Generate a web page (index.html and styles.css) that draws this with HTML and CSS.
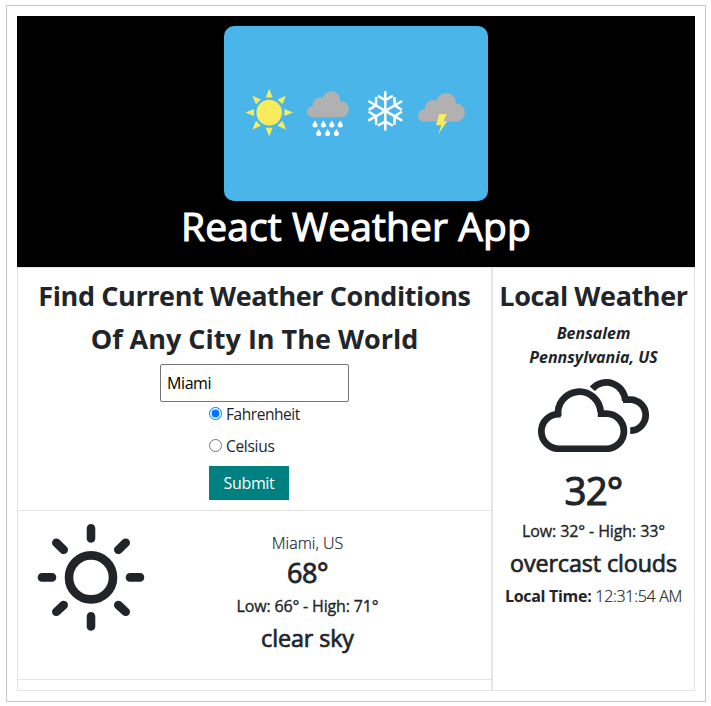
FILE: index.html
```html
<!DOCTYPE html>
<html lang="en">
<head>
<meta charset="utf-8">
<title>React Weather App</title>
<link rel="stylesheet" href="styles.css">
</head>
<body>
<div class="app">
  <header class="header">
    <svg class="banner" viewBox="0 0 264 175">
      <defs>
        <path id="ray" d="M0-23.8L3.5-15.2H-3.5Z"/>
        <path id="drop" d="M0-.3C.8 2 2.6 3.2 2.6 4.6A2.6 2.5 0 0 1-2.6 4.6C-2.6 3.2-.8 2 0-.3Z"/>
        <path id="arm" d="M0 0V-18.6M-6.6-14.4L0-10.8L6.6-14.4"/>
      </defs>
      <g fill="#f8eb5c" transform="translate(45.2 86.6)">
        <circle r="12.8"/>
        <use href="#ray"/><use href="#ray" transform="rotate(45)"/><use href="#ray" transform="rotate(90)"/><use href="#ray" transform="rotate(135)"/>
        <use href="#ray" transform="rotate(180)"/><use href="#ray" transform="rotate(225)"/><use href="#ray" transform="rotate(270)"/><use href="#ray" transform="rotate(315)"/>
      </g>
      <g fill="#b1b1b1">
        <circle cx="88.4" cy="85.7" r="5.4"/><circle cx="96.3" cy="78.9" r="7.5"/><circle cx="107.3" cy="74" r="9"/><circle cx="117" cy="83.2" r="8"/><path d="M88.4 80H117V91.2H88.4Z"/>
        <circle cx="200" cy="89.6" r="6"/><circle cx="209.3" cy="82.4" r="8.3"/><circle cx="222" cy="76.8" r="9.8"/><circle cx="231.8" cy="86.4" r="9.2"/><path d="M200 84H231.8V95.6H200Z"/>
      </g>
      <g fill="#fff">
        <use href="#drop" x="91" y="94.5"/><use href="#drop" x="99.4" y="94.5"/><use href="#drop" x="107.8" y="94.5"/><use href="#drop" x="116.3" y="94.5"/>
        <use href="#drop" x="94.7" y="103"/><use href="#drop" x="103.6" y="103"/><use href="#drop" x="112.4" y="103"/>
      </g>
      <g fill="none" stroke="#fff" stroke-width="2.5" stroke-linecap="round" transform="translate(161.3 84.8)">
        <use href="#arm"/><use href="#arm" transform="rotate(60)"/><use href="#arm" transform="rotate(120)"/><use href="#arm" transform="rotate(180)"/><use href="#arm" transform="rotate(240)"/><use href="#arm" transform="rotate(300)"/>
      </g>
      <path fill="#f8eb5c" d="M215.2 88H222.7L219.5 95.3H223.3L214.3 108L217.3 99.2H212Z"/>
    </svg>
    <h1 class="title">React Weather App</h1>
  </header>
  <main class="main">
    <div class="left">
      <section class="search">
        <h2 class="heading">Find Current Weather Conditions<br><span class="second">Of Any City In The World</span></h2>
        <input class="city" type="text" value="Miami">
        <div class="options">
          <label class="option"><input class="radio" type="radio" name="unit" checked><span class="fahr">Fahrenheit</span></label>
          <label class="option"><input class="radio" type="radio" name="unit"><span class="cels">Celsius</span></label>
          <button class="submit">Submit</button>
        </div>
      </section>
      <section class="result">
        <svg class="sun" viewBox="-54 -54.4 108 108">
          <circle r="22"/>
          <path d="M0-49V-39M0 39V49M-49 0H-39M39 0H49M-34.7-34.7L-27.3-27.6M34.7-34.7L27.3-27.6M-34.7 34.4L-27.3 27.6M34.7 34.4L27.3 27.6"/>
        </svg>
        <div class="details">
          <div class="place">Miami, US</div>
          <div class="temp">68°</div>
          <div class="range">Low: 66° - High: 71°</div>
          <div class="sky">clear sky</div>
        </div>
      </section>
    </div>
    <aside class="local">
      <h2 class="heading">Local Weather</h2>
      <div class="region">Bensalem<br>Pennsylvania, US</div>
      <svg class="clouds" viewBox="0 0 112 73">
        <path d="M22.7 35.1H20.7A17.3 17.3 0 0 0 20.7 69.8H68.3A17.3 17.3 0 0 0 68.3 34.6H59.8"/>
        <path d="M20.3 37.4A21.3 21.3 0 1 1 62.6 33"/>
        <path d="M54.3 9.8A18.9 18.9 0 0 1 87.3 22"/>
        <path d="M85 20.6H92.2A15.3 15.3 0 0 1 92.2 51.6"/>
      </svg>
      <div class="temp big">32°</div>
      <div class="range">Low: 32° - High: 33°</div>
      <div class="sky">overcast clouds</div>
      <div class="time"><b>Local Time:</b> 12:31:54 AM</div>
    </aside>
  </main>
</div>
</body>
</html>
```
FILE: styles.css
```css
* { box-sizing: border-box; }
body {
  margin: 0;
  padding: 5px 0 0 6px;
  background: #fff;
  color: #212529;
  font: 16px/24px "Open Sans", "Noto Sans", sans-serif;
  text-align: center;
  white-space: nowrap;
}
.app {
  width: 700px;
  height: 697px;
  padding: 10px;
  border: 1px solid #c8c8c8;
}
.header {
  height: 251px;
  padding-top: 10px;
  background: #000;
  color: #fff;
}
.banner {
  display: block;
  width: 264px;
  height: 175px;
  margin: 0 auto;
  border-radius: 10px;
  background: #4ab5e8;
}
.title {
  margin: 1px 0 0;
  font-size: 39px;
  font-weight: 400;
  line-height: 48px;
  letter-spacing: .1px;
  -webkit-text-stroke: 1.1px;
}
.main { display: flex; height: 424px; }
.left {
  display: flex;
  flex-direction: column;
  width: 475px;
  border: 1px solid #e4e4e4;
}
.search {
  display: flex;
  flex-direction: column;
  align-items: center;
  height: 243px;
  padding-top: 6px;
  border-bottom: 1px solid #e4e4e4;
}
.heading {
  margin: 0;
  font-size: 27px;
  font-weight: 700;
  line-height: 43px;
  letter-spacing: -.4px;
}
.second { letter-spacing: 0; }
.city {
  width: 189px;
  height: 38px;
  margin-top: 4px;
  padding: 1px 6px;
  border: 1px solid #767676;
  border-radius: 2px;
  background: #fff;
  color: #000;
  font: inherit;
  letter-spacing: -.4px;
}
.options {
  display: flex;
  flex-direction: column;
  align-items: flex-start;
  gap: 8px;
  width: 91px;
}
.option { display: flex; align-items: center; gap: 4px; height: 24px; }
.radio { width: 13px; height: 13px; margin: 0 0 1px; accent-color: #0075ff; }
.fahr, .cels { font-size: 15.5px; letter-spacing: -.45px; }
.cels { letter-spacing: -.3px; }
.submit {
  width: 80px;
  height: 34px;
  padding: 0;
  border: 0;
  background: #008080;
  color: #fff;
  font: inherit;
  letter-spacing: -.35px;
}
.result {
  display: flex;
  height: 169px;
  padding: 12px 0 0 19px;
  border-bottom: 1px solid #e4e4e4;
}
.sun {
  width: 108px;
  height: 108px;
  fill: none;
  stroke: #212529;
  stroke-width: 8.6;
  stroke-linecap: round;
}
.details { width: 325px; padding-top: 8px; }
.place { font-weight: 300; -webkit-text-stroke: .2px; }
.temp {
  font-size: 27px;
  line-height: 36px;
  letter-spacing: -.5px;
  -webkit-text-stroke: .8px;
}
.range {
  margin-top: 5px;
  line-height: 20px;
  letter-spacing: -.17px;
  -webkit-text-stroke: .35px;
}
.sky {
  margin-top: 8px;
  font-size: 23.3px;
  line-height: 29px;
  letter-spacing: -.1px;
  -webkit-text-stroke: .7px;
}
.local {
  width: 203px;
  padding-top: 6px;
  border: 1px solid #e4e4e4;
}
.region { margin-top: 4px; font-weight: 700; font-style: italic; }
.clouds {
  display: block;
  width: 112px;
  height: 73px;
  margin: 10px auto 14px;
  fill: none;
  stroke: #212529;
  stroke-width: 6.8;
}
.big {
  font-size: 38.5px;
  line-height: 48px;
  letter-spacing: -.9px;
  -webkit-text-stroke: 1.1px;
}
.big + .range { margin-top: 7px; letter-spacing: -.1px; }
.time {
  margin-top: 6px;
  font-weight: 300;
  letter-spacing: -.3px;
  -webkit-text-stroke: .2px;
}
.time b { font-weight: 700; -webkit-text-stroke: 0; }
```
